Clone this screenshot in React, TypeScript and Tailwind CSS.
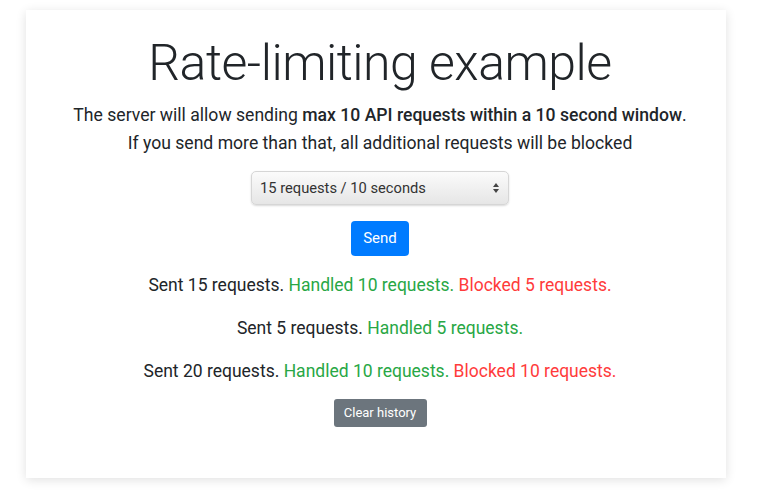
const history = [
  { sent: 15, handled: 10, blocked: 5 },
  { sent: 5, handled: 5, blocked: 0 },
  { sent: 20, handled: 10, blocked: 10 },
]

export default function App() {
  return (
    <div className="min-h-[501px] bg-white pt-[10px] pl-[26px] font-['Roboto',sans-serif] text-[#212529]">
      <div className="w-[700px] h-[468px] bg-white shadow-[0_2px_10px_rgba(0,0,0,0.12)] pl-[8px]">
        <div className="flex flex-col items-center pt-[25px]">
          <h1 className="text-[50px] leading-[56px] font-light tracking-[-0.5px]">Rate-limiting example</h1>

          <p className="mt-[10px] text-[17.6px] leading-[28px] text-center">
            The server will allow sending <span className="font-medium">max 10 API requests within a 10 second window</span>.
            <br />
            If you send more than that, all additional requests will be blocked
          </p>

          {/* native-looking select */}
          <div className="mt-[14px] w-[258px] h-[34px] rounded-[5px] border border-[#d6d6d6] bg-gradient-to-b from-[#fbfbfb] to-[#e6e6e6] shadow-[0_1px_2px_rgba(0,0,0,0.15)] flex items-center justify-between px-[8px]">
            <span className="text-[14.7px] text-[#333]">15 requests / 10 seconds</span>
            <svg width="8" height="12" viewBox="0 0 8 12" className="text-[#444]">
              <path d="M4 1 L7 5 H1 Z" fill="currentColor" />
              <path d="M4 11 L7 7 H1 Z" fill="currentColor" />
            </svg>
          </div>

          <button className="mt-[16px] w-[58px] h-[35px] rounded-[4px] bg-[#007bff] text-white text-[15px]">Send</button>

          <div className="mt-[16px] flex flex-col items-center gap-[17px] text-[17.5px] leading-[26px]">
            {history.map((h, i) => (
              <p key={i}>
                Sent {h.sent} requests.{" "}
                <span className="text-[#28a745]">Handled {h.handled} requests.</span>
                {h.blocked > 0 && <span className="text-[#ff3b3b]"> Blocked {h.blocked} requests.</span>}
              </p>
            ))}
          </div>

          <button className="mt-[15px] w-[93px] h-[28px] rounded-[3px] bg-[#6c757d] text-white text-[13px]">Clear history</button>
        </div>
      </div>
    </div>
  )
}
